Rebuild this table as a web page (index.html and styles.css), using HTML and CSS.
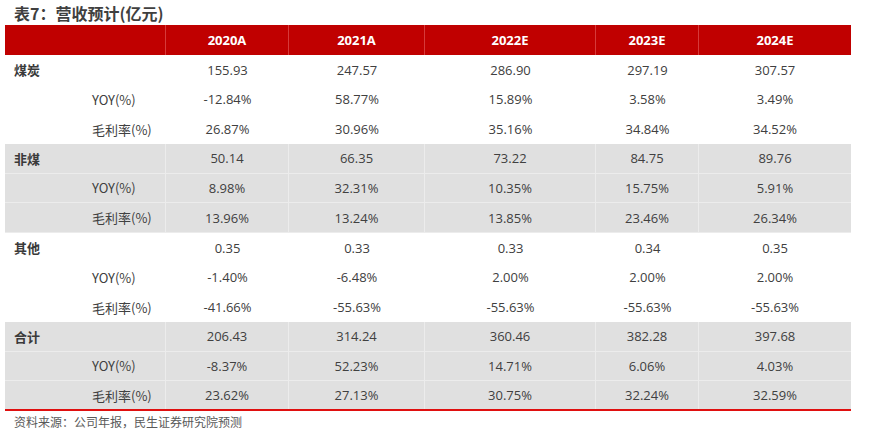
FILE: index.html
```html
<!DOCTYPE html>
<html lang="zh">
<head>
<meta charset="utf-8">
<title>表7：营收预计(亿元)</title>
<link rel="stylesheet" href="styles.css">
</head>
<body>
<div class="page">
  <h1 class="title">表7：营收预计(亿元)</h1>
  <div class="tbl">
    <div class="row head">
      <div class="c lab2"></div>
      <div class="c">2020A</div>
      <div class="c">2021A</div>
      <div class="c">2022E</div>
      <div class="c">2023E</div>
      <div class="c">2024E</div>
    </div>

    <div class="row"><div class="c l1">煤炭</div><div class="c l2"></div><div class="c">155.93</div><div class="c">247.57</div><div class="c">286.90</div><div class="c">297.19</div><div class="c">307.57</div></div>
    <div class="row"><div class="c l1"></div><div class="c l2">YOY(%)</div><div class="c">-12.84%</div><div class="c">58.77%</div><div class="c">15.89%</div><div class="c">3.58%</div><div class="c">3.49%</div></div>
    <div class="row"><div class="c l1"></div><div class="c l2">毛利率(%)</div><div class="c">26.87%</div><div class="c">30.96%</div><div class="c">35.16%</div><div class="c">34.84%</div><div class="c">34.52%</div></div>

    <div class="row gray"><div class="c l1">非煤</div><div class="c l2"></div><div class="c">50.14</div><div class="c">66.35</div><div class="c">73.22</div><div class="c">84.75</div><div class="c">89.76</div></div>
    <div class="row gray"><div class="c l1"></div><div class="c l2">YOY(%)</div><div class="c">8.98%</div><div class="c">32.31%</div><div class="c">10.35%</div><div class="c">15.75%</div><div class="c">5.91%</div></div>
    <div class="row gray"><div class="c l1"></div><div class="c l2">毛利率(%)</div><div class="c">13.96%</div><div class="c">13.24%</div><div class="c">13.85%</div><div class="c">23.46%</div><div class="c">26.34%</div></div>

    <div class="row"><div class="c l1">其他</div><div class="c l2"></div><div class="c">0.35</div><div class="c">0.33</div><div class="c">0.33</div><div class="c">0.34</div><div class="c">0.35</div></div>
    <div class="row"><div class="c l1"></div><div class="c l2">YOY(%)</div><div class="c">-1.40%</div><div class="c">-6.48%</div><div class="c">2.00%</div><div class="c">2.00%</div><div class="c">2.00%</div></div>
    <div class="row"><div class="c l1"></div><div class="c l2">毛利率(%)</div><div class="c">-41.66%</div><div class="c">-55.63%</div><div class="c">-55.63%</div><div class="c">-55.63%</div><div class="c">-55.63%</div></div>

    <div class="row gray"><div class="c l1">合计</div><div class="c l2"></div><div class="c">206.43</div><div class="c">314.24</div><div class="c">360.46</div><div class="c">382.28</div><div class="c">397.68</div></div>
    <div class="row gray"><div class="c l1"></div><div class="c l2">YOY(%)</div><div class="c">-8.37%</div><div class="c">52.23%</div><div class="c">14.71%</div><div class="c">6.06%</div><div class="c">4.03%</div></div>
    <div class="row gray last"><div class="c l1"></div><div class="c l2">毛利率(%)</div><div class="c">23.62%</div><div class="c">27.13%</div><div class="c">30.75%</div><div class="c">32.24%</div><div class="c">32.59%</div></div>
  </div>
  <p class="source">资料来源：公司年报，民生证券研究院预测</p>
</div>
</body>
</html>
```

FILE: styles.css
```css
* { box-sizing: border-box; }
html, body { margin: 0; padding: 0; background: #ffffff; }
body {
  font-family: "Open Sans", "Noto Sans CJK SC", sans-serif;
  color: #404040;
}
.page {
  width: 876px;
  height: 444px;
  padding: 0 0 0 5px;
}
.title {
  margin: 0;
  padding: 3px 0 0 9px;
  height: 25px;
  font-family: "Noto Sans CJK SC", sans-serif;
  font-size: 16px;
  line-height: 20px;
  font-weight: 700;
  color: #3f3f3f;
}
.tbl {
  width: 846px;
  display: flex;
  flex-direction: column;
}
.row {
  display: grid;
  grid-template-columns: 86px 75px 123px 136px 171px 103px 152px;
  height: 29.667px;
  font-size: 13px;
}
.row.head {
  grid-template-columns: 161px 123px 136px 171px 103px 152px;
  height: 30px;
  background: #c00000;
  color: #ffffff;
  font-weight: 700;
}
.row.head .c { border-right: 1px solid #d63a3a; }
.row.head .c:last-child { border-right: 0; }
.c {
  display: flex;
  align-items: center;
  justify-content: center;
  white-space: nowrap;
}
.l1, .l2 {
  justify-content: flex-start;
  font-family: "Noto Sans CJK SC", sans-serif;
}
.l1 { padding-left: 9px; font-weight: 700; color: #3a3a3a; }
.l2 { padding-left: 1px; }
.row.gray { background: #e0e0e0; }
.row.gray .c { border-bottom: 1px solid #ececec; }
.row.gray .c:not(.l1):not(:last-child) { border-right: 1px solid #ececec; }
.row.gray.last .c { border-bottom: 0; }
.row.last { border-bottom: 2px solid #e01010; }
.source {
  margin: 0;
  padding-left: 9px;
  font-family: "Noto Sans CJK SC", sans-serif;
  font-size: 12px;
  line-height: 22px;
  color: #595959;
}
```
